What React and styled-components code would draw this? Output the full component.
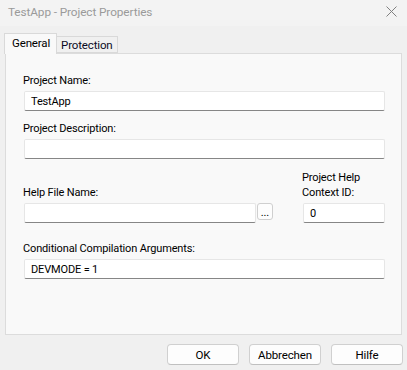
import React from 'react';
import styled, { createGlobalStyle } from 'styled-components';

const GlobalStyle = createGlobalStyle`
  html, body {
    margin: 0;
    padding: 0;
    background: #f0f0f0;
  }
  body {
    font-family: Roboto, "Open Sans", "Liberation Sans", sans-serif;
    font-size: 11px;
    letter-spacing: -0.15px;
    color: #000;
  }
`;

const Dialog = styled.div`
  width: 407px;
  height: 370px;
  display: flex;
  flex-direction: column;
  background: #f0f0f0;
  overflow: hidden;
`;

const TitleBar = styled.div`
  height: 26px;
  display: flex;
  align-items: center;
  justify-content: space-between;
  padding: 0 8px 3px 8px;
  box-sizing: border-box;
  background: #f3f3f3;
  color: #9a9a9a;
  font-size: 11.8px;
  letter-spacing: -0.1px;
`;

const CloseIcon = () => (
  <svg width="11" height="11" viewBox="0 0 11 11" style={{ marginRight: 2 }}>
    <path d="M0.5 0.5 L10.5 10.5 M10.5 0.5 L0.5 10.5" stroke="#808080" strokeWidth="1" fill="none" />
  </svg>
);

const TabStrip = styled.div`
  display: flex;
  align-items: flex-end;
  margin-top: 7px;
  padding-left: 4px;
  height: 20px;
  position: relative;
  z-index: 1;
`;

const Tab = styled.div`
  box-sizing: border-box;
  height: ${p => (p.$active ? '21px' : '17px')};
  padding: ${p => (p.$active ? '2px 6px 0 7px' : '1px 4px 0 4px')};
  border: 1px solid #d9d9d9;
  border-bottom: ${p => (p.$active ? 'none' : '1px solid #d9d9d9')};
  border-left: ${p => (p.$active ? '1px solid #d9d9d9' : 'none')};
  background: ${p => (p.$active ? '#f9f9f9' : '#f0f0f0')};
  color: ${p => (p.$active ? '#000' : '#0a0a24')};
  font-size: 11.5px;
  line-height: 15px;
  margin-bottom: ${p => (p.$active ? '-1px' : '0')};
`;

const Panel = styled.div`
  margin: 0 5px 0 5px;
  height: 282px;
  box-sizing: border-box;
  border: 1px solid #dcdcdc;
  background: #f9f9f9;
  padding: 19px 16px 0 18px;
  display: flex;
  flex-direction: column;
`;

const Label = styled.div`
  font-size: 11px;
  line-height: 15px;
  margin-top: ${p => p.$top || 0}px;
  margin-bottom: 3px;
  margin-left: -1px;
`;

const Input = styled.div`
  box-sizing: border-box;
  height: 20px;
  width: 100%;
  background: #fff;
  border: 1px solid #e6e6e6;
  border-bottom: 1px solid #868686;
  border-radius: 2px;
  padding-left: 6px;
  display: flex;
  align-items: center;
  font-size: 11px;
`;

const HelpRow = styled.div`
  display: grid;
  grid-template-columns: 1fr 82px;
  column-gap: 30px;
  margin-top: 11px;
  align-items: end;
`;

const FileRow = styled.div`
  display: flex;
  align-items: flex-start;
  gap: 1px;
`;

const BrowseButton = styled.div`
  box-sizing: border-box;
  flex: none;
  width: 16px;
  height: 17px;
  border: 1px solid #cfcfcf;
  border-radius: 3px;
  background: #fdfdfd;
  display: flex;
  align-items: center;
  justify-content: center;
  font-size: 11px;
  line-height: 1;
  padding-top: 2px;
`;

const Footer = styled.div`
  display: flex;
  justify-content: flex-end;
  gap: 10px;
  padding: 9px 4px 0 0;
`;

const Button = styled.div`
  box-sizing: border-box;
  width: 72px;
  height: 21px;
  border: 1px solid #d0d0d0;
  border-bottom-color: #c0c0c0;
  border-radius: 4px;
  background: #fdfdfd;
  display: flex;
  align-items: center;
  justify-content: center;
  font-size: 11.5px;
`;

export default function App() {
  return (
    <>
      <GlobalStyle />
      <Dialog>
        <TitleBar>
          <span>TestApp - Project Properties</span>
          <CloseIcon />
        </TitleBar>
        <TabStrip>
          <Tab $active>General</Tab>
          <Tab>Protection</Tab>
        </TabStrip>
        <Panel>
          <Label>Project Name:</Label>
          <Input>TestApp</Input>
          <Label $top={10}>Project Description:</Label>
          <Input />
          <HelpRow>
            <div>
              <Label>Help File Name:</Label>
              <FileRow>
                <Input>{''}</Input>
                <BrowseButton>...</BrowseButton>
              </FileRow>
            </div>
            <div>
              <Label>Project Help<br />Context ID:</Label>
              <Input>0</Input>
            </div>
          </HelpRow>
          <Label $top={18}>Conditional Compilation Arguments:</Label>
          <Input>DEVMODE = 1</Input>
        </Panel>
        <Footer>
          <Button>OK</Button>
          <Button>Abbrechen</Button>
          <Button>Hilfe</Button>
        </Footer>
      </Dialog>
    </>
  );
}
